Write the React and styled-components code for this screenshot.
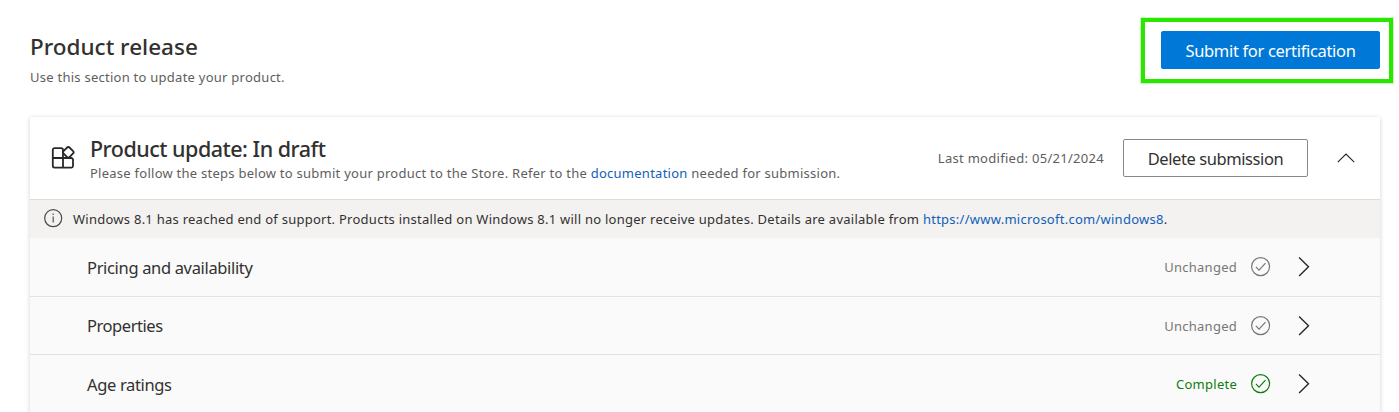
import React from "react";
import styled, { createGlobalStyle } from "styled-components";

const Global = createGlobalStyle`
  html, body { margin: 0; background: #fff; }
  body { height: 412px; overflow: hidden; font-family: "Segoe UI", "Noto Sans", "Open Sans", sans-serif; color: #323130; }
  * { box-sizing: border-box; }
`;

const Page = styled.main`
  height: 412px;
  padding: 31px 19px 0 30px;
  overflow: hidden;
`;

const PageHeader = styled.header`
  display: flex;
  justify-content: space-between;
  align-items: flex-start;
  height: 86px;
`;

const Title = styled.h1`
  margin: 0;
  font-size: 22.5px;
  line-height: 32px;
  font-weight: 500;
  letter-spacing: ${(p) => p.$track || "0"};
  white-space: nowrap;
`;

const CardTitle = styled(Title).attrs({ as: "h2" })`
  font-size: 21.5px;
  line-height: 31px;
`;

const Caption = styled.p`
  margin: 0;
  font-size: 13px;
  line-height: 20px;
  color: #605e5c;
  letter-spacing: ${(p) => p.$track || "0.255px"};
  white-space: nowrap;
`;

const Subtitle = styled(Caption)`
  margin-top: 4px;
`;

const CardSubtitle = styled(Caption)`
  margin-top: -1px;
`;

const Highlight = styled.div`
  position: relative;
  &::after {
    content: "";
    position: absolute;
    inset: -13px -13px -14px -20px;
    border: 4px solid #2ae600;
    outline: 1px solid #c8f8bc;
  }
`;

const Button = styled.button`
  display: block;
  width: ${(p) => p.$width};
  height: 38px;
  padding: 1px 0 0;
  border: 1px solid ${(p) => (p.$primary ? "#0078d7" : "#8a8886")};
  border-radius: 2px;
  background: ${(p) => (p.$primary ? "#0078d7" : "#fff")};
  color: ${(p) => (p.$primary ? "#fff" : "#323130")};
  font-family: inherit;
  font-size: 16.5px;
  letter-spacing: ${(p) => p.$track || "0"};
  white-space: nowrap;
`;

const Card = styled.section`
  width: 1350px;
  height: 330px;
  border-radius: 3px 3px 0 0;
  background: #fafafa;
  box-shadow: 0 1px 5px rgba(0, 0, 0, 0.18);
  overflow: hidden;
`;

const CardHeader = styled.div`
  display: flex;
  align-items: center;
  height: 83px;
  padding: 0 25px 0 21px;
  background: #fff;
  border-bottom: 1px solid #dcdcdc;
`;

const Heading = styled.div`
  flex: 1;
  height: 50px;
  margin-left: 15px;
`;

const Modified = styled(Caption)`
  margin-right: 19px;
`;

const Collapse = styled.div`
  display: flex;
  margin-left: 29px;
`;

const Link = styled.a`
  color: #1160b7;
`;

const Notice = styled.div`
  display: flex;
  align-items: center;
  gap: 10px;
  height: 38px;
  padding: 0 0 2px 14px;
  background: #f3f2f1;
`;

const NoticeText = styled(Caption)`
  padding-top: 2px;
  color: #323130;
`;

const Row = styled.div`
  display: flex;
  align-items: center;
  height: ${(p) => p.$height};
  padding: 0 70px 0 57px;
  border-bottom: 1px solid #e3e3e3;
`;

const RowName = styled.span`
  flex: 1;
  padding-top: 1px;
  font-size: 16.5px;
  line-height: 24px;
`;

const RowLabel = styled.span`
  letter-spacing: ${(p) => p.$track};
`;

const Status = styled.div`
  display: flex;
  align-items: center;
  gap: 14px;
  margin-right: 27px;
  color: ${(p) => (p.$complete ? "#107c10" : "#797775")};
`;

const StatusText = styled(Caption)`
  color: inherit;
`;

const AppsIcon = () => (
  <svg width="24" height="24" viewBox="0 0 24 24" fill="none" stroke="#292827" strokeWidth="1.8" strokeLinejoin="round">
    <path d="M12 8V4A1.8 1.8 0 0 0 10.2 2.2H3.6A1.8 1.8 0 0 0 1.8 4v15.8A1.8 1.8 0 0 0 3.6 21.6h16.6a1.8 1.8 0 0 0 1.8-1.8v-6a1.8 1.8 0 0 0-1.8-1.8H1.8M12 21.6V6" />
    <rect x="13.1" y="2.1" width="8.4" height="8.4" rx="1.6" transform="rotate(45 17.3 6.3)" fill="#fff" />
  </svg>
);

const InfoIcon = () => (
  <svg width="19" height="19" viewBox="0 0 19 19" fill="none">
    <circle cx="9.2" cy="9.2" r="8.5" stroke="#4a4846" strokeWidth="1.2" />
    <path d="M9.2 7.5v6M9.2 4.6v1.5" stroke="#605e5c" strokeWidth="1.3" />
  </svg>
);

const CheckIcon = () => (
  <svg width="20" height="20" viewBox="0 0 20 20" fill="none" stroke="currentColor" strokeWidth="1.2">
    <circle cx="9.6" cy="9.6" r="9" />
    <path d="M4.9 9.9l3.1 3.2 6.5-7" />
  </svg>
);

const ChevronRight = () => (
  <svg width="12" height="20" viewBox="0 0 12 20" fill="none" stroke="#292827" strokeWidth="1.4">
    <path d="M1.1 .5l9.4 9.2-9.4 9.2" />
  </svg>
);

const ChevronUp = () => (
  <svg width="18" height="10" viewBox="0 0 18 10" fill="none" stroke="#292827" strokeWidth="1.15">
    <path d="M.8 9.2L9 1l8.2 8.2" />
  </svg>
);

const steps = [
  { name: "Pricing and availability", track: "-0.34px", status: "Unchanged", height: "59px" },
  { name: "Properties", track: "-0.45px", status: "Unchanged", height: "58px" },
  { name: "Age ratings", track: "-0.35px", status: "Complete", height: "59px" },
];

export default function App() {
  return (
    <Page>
      <Global />
      <PageHeader>
        <div>
          <Title>Product release</Title>
          <Subtitle>Use this section to update your product.</Subtitle>
        </div>
        <Highlight>
          <Button $primary $width="219px" $track="-0.32px">Submit for certification</Button>
        </Highlight>
      </PageHeader>
      <Card>
        <CardHeader>
          <AppsIcon />
          <Heading>
            <CardTitle $track="-0.5px">Product update: In draft</CardTitle>
            <CardSubtitle>
              Please follow the steps below to submit your product to the Store. Refer to the{" "}
              <Link>documentation</Link> needed for submission.
            </CardSubtitle>
          </Heading>
          <Modified $track="0.29px">Last modified: 05/21/2024</Modified>
          <Button $width="185px" $track="-0.42px">Delete submission</Button>
          <Collapse>
            <ChevronUp />
          </Collapse>
        </CardHeader>
        <Notice>
          <InfoIcon />
          <NoticeText>
            Windows 8.1 has reached end of support. Products installed on Windows 8.1 will no longer receive updates. Details are available from{" "}
            <Link>https://www.microsoft.com/windows8</Link>.
          </NoticeText>
        </Notice>
        {steps.map((s) => (
          <Row key={s.name} $height={s.height}>
            <RowName>
              <RowLabel $track={s.track}>{s.name}</RowLabel>
            </RowName>
            <Status $complete={s.status === "Complete"}>
              <StatusText>{s.status}</StatusText>
              <CheckIcon />
            </Status>
            <ChevronRight />
          </Row>
        ))}
      </Card>
    </Page>
  );
}
